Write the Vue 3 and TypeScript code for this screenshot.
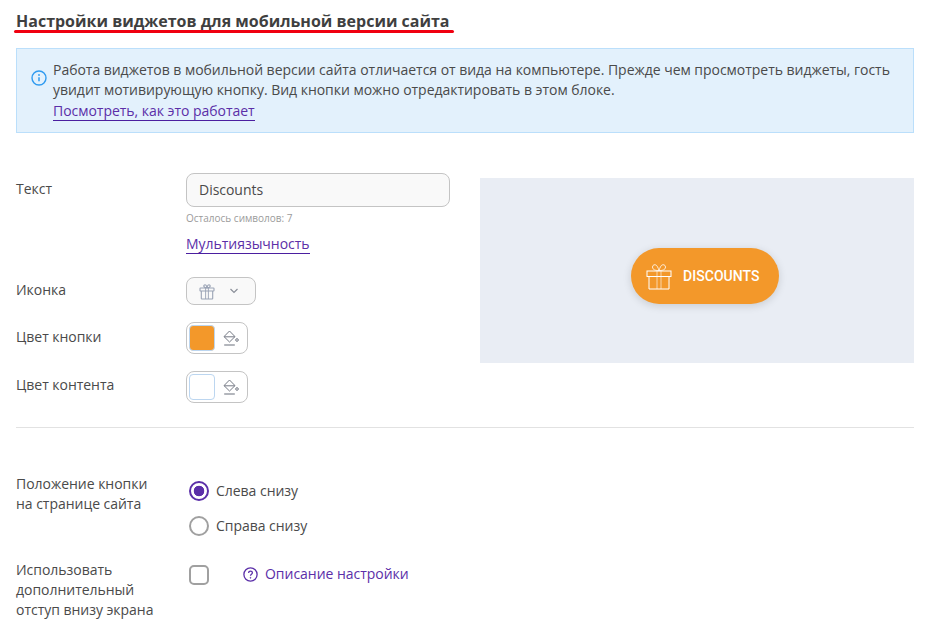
<script setup lang="ts">
const positions: { label: string; checked: boolean }[] = [
  { label: 'Слева снизу', checked: true },
  { label: 'Справа снизу', checked: false },
]
</script>

<template>
  <div class="page">
    <h1 class="title">Настройки виджетов для мобильной версии сайта</h1>

    <div class="notice">
      <svg class="notice-icon" width="16" height="16" viewBox="0 0 16 16" fill="none">
        <circle cx="8" cy="8" r="7" stroke="#2f9bf0" stroke-width="1.4" />
        <circle cx="8" cy="5" r="0.9" fill="#2f9bf0" />
        <path d="M8 7.2v4" stroke="#2f9bf0" stroke-width="1.5" />
      </svg>
      <div class="notice-text">
        <div>Работа виджетов в мобильной версии сайта отличается от вида на компьютере. Прежде чем просмотреть виджеты, гость увидит мотивирующую кнопку. Вид кнопки можно отредактировать в этом блоке.</div>
        <a class="link notice-link">Посмотреть, как это работает</a>
      </div>
    </div>

    <div class="top">
      <div class="form">
        <div class="row row-text">
          <div class="label label-text">Текст</div>
          <div class="control">
            <div class="input">Discounts</div>
            <div class="hint">Осталось символов: 7</div>
            <a class="link multi">Мультиязычность</a>
          </div>
        </div>
        <div class="row row-icon">
          <div class="label">Иконка</div>
          <div class="select">
            <svg width="16" height="17" viewBox="0 0 16 17" fill="none" stroke="#9aa3b5" stroke-width="1.1">
              <rect x="1" y="5" width="14" height="3" rx="0.6" />
              <path d="M2.3 8v7.4a.6.6 0 0 0 .6.6h10.2a.6.6 0 0 0 .6-.6V8" />
              <path d="M6.6 5v11M9.4 5v11" stroke-width="0.9" />
              <path d="M8 4.8C6.6 4.8 4.8 4.3 4.8 3 4.8 2 6 1.4 6.9 2.2 7.5 2.8 8 4.8 8 4.8ZM8 4.8c1.4 0 3.2-.5 3.2-1.8 0-1-1.2-1.6-2.1-.8C8.5 2.8 8 4.8 8 4.8Z" />
            </svg>
            <svg width="10" height="6" viewBox="0 0 10 6" fill="none" stroke="#8a8f99" stroke-width="1.2">
              <path d="M1.5 1l3.5 3.4L8.5 1" />
            </svg>
          </div>
        </div>
        <div class="row row-color">
          <div class="label">Цвет кнопки</div>
          <div class="color">
            <span class="swatch swatch-orange"></span>
            <svg class="bucket" width="16" height="17" viewBox="0 0 16 17" fill="none" stroke="#757a85" stroke-width="1">
              <path d="M6.5 1L1 6.6 6.5 12 12 6.6Z" />
              <path d="M1.2 6.8h10.6" />
              <circle cx="14" cy="10" r="1.3" />
              <path d="M1.2 15h10.6" stroke-width="1.1" />
            </svg>
          </div>
        </div>
        <div class="row row-color-2">
          <div class="label">Цвет контента</div>
          <div class="color">
            <span class="swatch swatch-white"></span>
            <svg class="bucket" width="16" height="17" viewBox="0 0 16 17" fill="none" stroke="#757a85" stroke-width="1">
              <path d="M6.5 1L1 6.6 6.5 12 12 6.6Z" />
              <path d="M1.2 6.8h10.6" />
              <circle cx="14" cy="10" r="1.3" />
              <path d="M1.2 15h10.6" stroke-width="1.1" />
            </svg>
          </div>
        </div>
      </div>

      <div class="preview">
        <div class="cta">
          <svg width="26" height="28" viewBox="0 0 26 28" fill="none" stroke="#fff" stroke-width="1">
            <rect x="1" y="9" width="24" height="5.5" />
            <path d="M3 14.5V27h20V14.5" />
            <path d="M11 9v18M15 9v18" stroke-opacity="0.6" />
            <path d="M13 8.6C10 8.6 6.5 8 6.5 5 6.5 2.8 9 2 10.5 3.4 12 4.8 13 8.6 13 8.6ZM13 8.6c3 0 6.5-.6 6.5-3.6 0-2.2-2.5-3-4-1.6C14 4.8 13 8.6 13 8.6Z" stroke-opacity="0.8" />
          </svg>
          <span class="cta-text">DISCOUNTS</span>
        </div>
      </div>
    </div>

    <div class="divider"></div>

    <div class="row row-position">
      <div class="label">Положение кнопки<br />на странице сайта</div>
      <div class="radios">
        <label v-for="p in positions" :key="p.label" class="radio-row">
          <span class="radio" :class="{ checked: p.checked }"></span>
          <span>{{ p.label }}</span>
        </label>
      </div>
    </div>

    <div class="row row-offset">
      <div class="label">Использовать<br />дополнительный<br />отступ внизу экрана</div>
      <span class="checkbox"></span>
      <a class="help">
        <svg width="15" height="15" viewBox="0 0 15 15" fill="none" stroke="#5b2fa8" stroke-width="1.3">
          <circle cx="7.5" cy="7.5" r="6.6" />
          <path d="M5.6 5.9c0-1 .8-1.7 1.9-1.7s1.9.7 1.9 1.6c0 1.4-1.9 1.4-1.9 2.9" />
          <circle cx="7.5" cy="10.8" r="0.5" fill="#5b2fa8" stroke-width="0.6" />
        </svg>
        <span>Описание настройки</span>
      </a>
    </div>
  </div>
</template>

<style scoped>
.page {
  width: 930px;
  height: 630px;
  overflow: hidden;
  box-sizing: border-box;
  padding: 12px 16px 0;
  font-family: "Open Sans", "Noto Sans", sans-serif;
  font-size: 14px;
  line-height: 20px;
  letter-spacing: -0.03px;
  color: #4a4a4a;
  background: #fff;
}
.title {
  position: relative;
  margin: 0 0 18px;
  height: 18px;
  font-size: 16px;
  line-height: 18px;
  font-weight: 700;
  letter-spacing: 0;
  color: #3f3f3f;
}
.title::after {
  content: "";
  position: absolute;
  left: -2px;
  top: 18px;
  width: 440px;
  height: 3px;
  border-radius: 2px;
  background: #f00010;
}
.notice {
  display: flex;
  gap: 6px;
  box-sizing: border-box;
  width: 898px;
  height: 85px;
  padding: 11px 14px 0;
  background: #e3f1fc;
  border: 1px solid #bbdffb;
}
.notice-icon {
  flex: none;
  margin-top: 10px;
}
.notice-text {
  line-height: 20px;
}
.link {
  color: #5b2fa8;
  border-bottom: 1px solid #4b1fa0;
  display: inline-block;
  line-height: 18px;
}
.notice-link {
  display: table;
  margin-top: 2px;
}
.top {
  display: flex;
  margin-top: 40px;
  height: 254px;
}
.form {
  width: 464px;
  flex: none;
}
.row {
  display: flex;
}
.label {
  width: 170px;
  flex: none;
  line-height: 20px;
}
.label-text {
  padding-top: 6px;
}
.row-text {
  height: 104px;
}
.input {
  box-sizing: border-box;
  width: 264px;
  height: 34px;
  padding: 0 12px;
  line-height: 32px;
  background: #f9f9f9;
  border: 1px solid #c4c4c4;
  border-radius: 8px;
}
.hint {
  margin-top: 4px;
  font-size: 10px;
  line-height: 14px;
  letter-spacing: 0;
  color: #9b9b9b;
}
.multi {
  margin-top: 10px;
}
.row-icon {
  height: 45px;
  align-items: flex-start;
}
.row-icon .label {
  padding-top: 3px;
}
.select {
  box-sizing: border-box;
  width: 70px;
  height: 28px;
  display: flex;
  align-items: center;
  gap: 14px;
  padding-left: 12px;
  background: #f9f9f9;
  border: 1px solid #c4c4c4;
  border-radius: 8px;
}
.row-color {
  height: 49px;
}
.row-color-2 {
  height: 49px;
}
.row-color .label {
  padding-top: 5px;
}
.row-color-2 .label {
  padding-top: 4px;
}
.color {
  box-sizing: border-box;
  width: 62px;
  height: 32px;
  display: flex;
  align-items: center;
  gap: 8px;
  padding-left: 2px;
  background: #fff;
  border: 1px solid #c4c4c4;
  border-radius: 8px;
}
.swatch {
  box-sizing: border-box;
  width: 26px;
  height: 26px;
  border-radius: 4px;
  border: 1px solid #bcd6f0;
}
.swatch-orange {
  background: #f3982a;
}
.swatch-white {
  background: #fff;
}
.bucket {
  flex: none;
}
.preview {
  box-sizing: border-box;
  margin-top: 5px;
  width: 434px;
  height: 185px;
  padding: 11px 0 0 16px;
  display: flex;
  align-items: center;
  justify-content: center;
  background: #e9edf4;
}
.cta {
  box-sizing: border-box;
  width: 148px;
  height: 56px;
  display: flex;
  align-items: center;
  gap: 11px;
  padding-left: 15px;
  border-radius: 28px;
  background: #f3982a;
  box-shadow: 0 2px 8px rgba(0, 0, 0, 0.14);
}
.cta-text {
  color: #fff;
  font-family: Roboto, sans-serif;
  font-size: 14px;
  font-weight: 500;
  letter-spacing: 0.05px;
}
.divider {
  width: 898px;
  height: 1px;
  background: #e2e2e2;
}
.row-position {
  margin-top: 46px;
  height: 86px;
}
.radios {
  display: flex;
  flex-direction: column;
  gap: 15px;
  margin-left: 3px;
  margin-top: 7px;
}
.radio-row {
  display: flex;
  align-items: center;
  gap: 7px;
  height: 20px;
}
.radio {
  box-sizing: border-box;
  width: 20px;
  height: 20px;
  border-radius: 50%;
  border: 2px solid #a0a0a0;
  background: #fff;
}
.radio.checked {
  border-color: #5b2fa8;
  background: radial-gradient(circle, #5b2fa8 0 5px, #fff 5.6px);
}
.checkbox {
  box-sizing: border-box;
  width: 20px;
  height: 20px;
  margin-left: 3px;
  border: 2px solid #a0a0a0;
  border-radius: 5px;
  margin-top: 5px;
}
.help {
  display: flex;
  align-items: center;
  gap: 7px;
  height: 20px;
  margin-left: 34px;
  margin-top: 4px;
  color: #5b2fa8;
}
</style>

<style>
html,
body {
  margin: 0;
  background: #fff;
}
</style>
